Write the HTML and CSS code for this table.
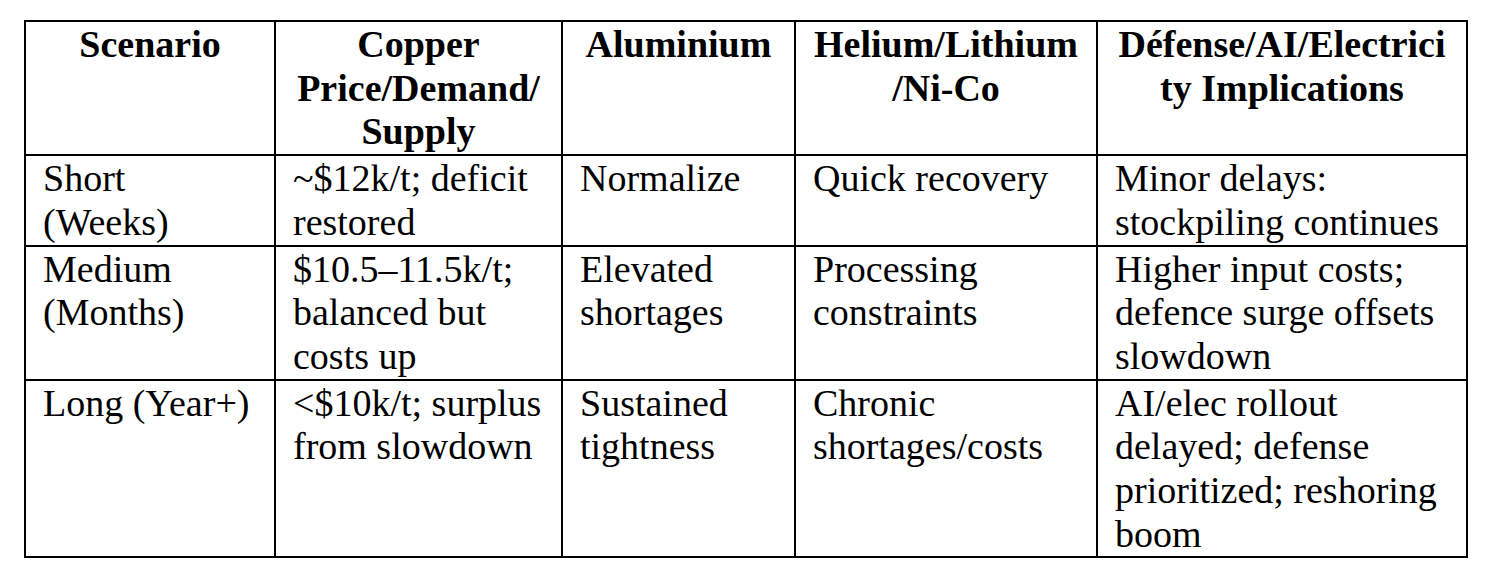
FILE: index.html
```html
<!DOCTYPE html>
<html lang="en">
<head>
<meta charset="utf-8">
<title>Scenarios</title>
<link rel="stylesheet" href="styles.css">
</head>
<body>
<table class="grid">
  <colgroup>
    <col class="c1"><col class="c2"><col class="c3"><col class="c4"><col class="c5">
  </colgroup>
  <thead>
    <tr>
      <th>Scenario</th>
      <th>Copper<br>Price/Demand/<br>Supply</th>
      <th>Aluminium</th>
      <th>Helium/Lithium<br>/Ni-Co</th>
      <th>Défense/AI/Electrici<br>ty Implications</th>
    </tr>
  </thead>
  <tbody>
    <tr>
      <td>Short<br>(Weeks)</td>
      <td>~$12k/t; deficit<br>restored</td>
      <td>Normalize</td>
      <td>Quick recovery</td>
      <td>Minor delays:<br>stockpiling continues</td>
    </tr>
    <tr>
      <td>Medium<br>(Months)</td>
      <td>$10.5–11.5k/t;<br>balanced but<br>costs up</td>
      <td>Elevated<br>shortages</td>
      <td>Processing<br>constraints</td>
      <td>Higher input costs;<br>defence surge offsets<br>slowdown</td>
    </tr>
    <tr>
      <td>Long (Year+)</td>
      <td>&lt;$10k/t; surplus<br>from slowdown</td>
      <td>Sustained<br>tightness</td>
      <td>Chronic<br>shortages/costs</td>
      <td>AI/elec rollout<br>delayed; defense<br>prioritized; reshoring<br>boom</td>
    </tr>
  </tbody>
</table>
</body>
</html>
```
FILE: styles.css
```css
html, body {
  margin: 0;
  padding: 0;
  background: #ffffff;
}

body {
  padding: 20px 0 0 24px;
  font-family: "Liberation Serif", "Times New Roman", serif;
  color: #000000;
}

.grid {
  border-collapse: collapse;
  table-layout: fixed;
  width: 1442px;
  border: 2px solid #000;
}

.c1 { width: 250px; }
.c2 { width: 287px; }
.c3 { width: 233px; }
.c4 { width: 302px; }
.c5 { width: 370px; }

.grid th,
.grid td {
  border: 2px solid #000;
  padding: 1px 17px 0;
  font-size: 38px;
  line-height: 43.7px;
  vertical-align: top;
  white-space: nowrap;
}

.grid th {
  font-weight: bold;
  text-align: center;
}

.grid td {
  font-weight: normal;
  text-align: left;
}
```
